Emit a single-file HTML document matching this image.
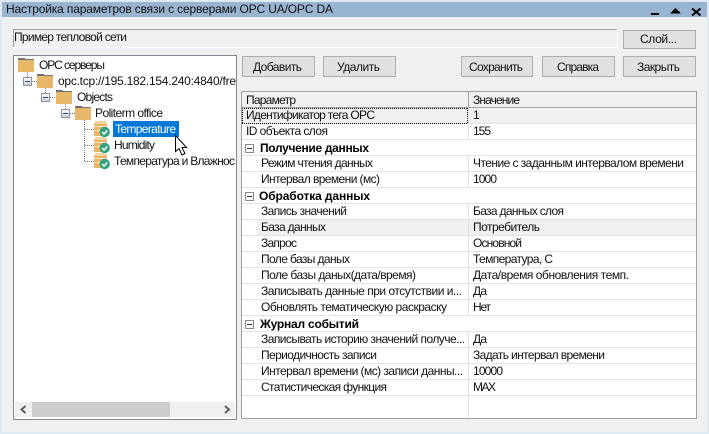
<!DOCTYPE html>
<html><head><meta charset="utf-8"><style>
html,body{margin:0;padding:0;background:#f0f0f0;width:709px;height:434px;overflow:hidden}
svg{display:block}
text{font-family:"Liberation Sans",sans-serif;font-size:12px;fill:#111}
.b{font-weight:bold;fill:#000}
</style></head><body>
<svg width="709" height="434" viewBox="0 0 709 434" xmlns="http://www.w3.org/2000/svg" shape-rendering="crispEdges">
<defs>
<g id="fd"><rect x="0" y="0" width="7" height="1" fill="#6f6f6f"/><rect x="0" y="1" width="16" height="1" fill="#6f6f6f"/><rect x="0" y="2" width="16" height="12" fill="#e8b868"/></g>
<linearGradient id="eg" x1="0" y1="0" x2="0" y2="1"><stop offset="0" stop-color="#fff"/><stop offset="1" stop-color="#c8cdd6"/></linearGradient>
<g id="ex"><rect x=".5" y=".5" width="8" height="8" fill="url(#eg)" stroke="#8c95a0"/><rect x="2" y="4" width="5" height="1" fill="#2b4a7e"/></g>
<g id="db"><rect x="0" y="2" width="13" height="13" fill="#e8b868"/><rect x="1" y="0" width="11" height="3" fill="#f3d49c"/><rect x="0" y="5" width="13" height="1" fill="#f8e8c8"/><rect x="0" y="9" width="13" height="1" fill="#f8e8c8"/><g shape-rendering="auto"><circle cx="10.700" cy="11" r="5.200" fill="#34a27f"/><path d="M8.200 11l1.900 2 3.200-3.500" fill="none" stroke="#fff" stroke-width="1.600"/></g></g>
</defs>
<!-- frame -->
<rect width="709" height="434" fill="#dfe9f5"/>
<rect x="2" y="17" width="705" height="415" fill="#f0f0f0"/>
<rect x="2" y="2" width="705" height="15" fill="#99b4d1"/>
<text x="6" y="13" textLength="327" lengthAdjust="spacing">Настройка параметров связи с серверами OPC UA/OPC DA</text>
<rect x="651" y="13" width="8" height="2" fill="#000"/>
<path d="M670 13.500L675.500 8L681 13.500Z" fill="#000" shape-rendering="auto"/>
<path d="M692 8.500L700.500 15.500M700.500 8.500L692 15.500" stroke="#000" stroke-width="2" fill="none" shape-rendering="auto"/>
<!-- layer name box -->
<rect x="13" y="29" width="605" height="19" fill="#fff"/>
<rect x="13" y="29" width="604" height="18" fill="#f0f0f0"/>
<rect x="13" y="29" width="604" height="1" fill="#a0a0a0"/>
<rect x="13" y="29" width="1" height="18" fill="#a0a0a0"/>
<text x="14" y="41" textLength="113" lengthAdjust="spacing">Пример тепловой сети</text>
<!-- buttons -->
<g fill="#e1e1e1" stroke="#adadad">
<rect x="623.500" y="30.500" width="72" height="18"/>
<rect x="242.500" y="56.500" width="72" height="20"/>
<rect x="323.500" y="56.500" width="72" height="20"/>
<rect x="461.500" y="56.500" width="71" height="20"/>
<rect x="542.500" y="56.500" width="72" height="20"/>
<rect x="623.500" y="56.500" width="72" height="20"/>
</g>
<text x="640" y="43" textLength="37" lengthAdjust="spacing">Слой...</text>
<text x="253" y="71" textLength="49" lengthAdjust="spacing">Добавить</text>
<text x="337" y="71" textLength="43" lengthAdjust="spacing">Удалить</text>
<text x="469" y="71" textLength="54" lengthAdjust="spacing">Сохранить</text>
<text x="557" y="71" textLength="42" lengthAdjust="spacing">Справка</text>
<text x="637" y="71" textLength="43" lengthAdjust="spacing">Закрыть</text>
<!-- tree -->
<rect x="13.500" y="55.500" width="223" height="364" fill="#fff" stroke="#828790"/>
<use href="#fd" x="18" y="58"/>
<use href="#fd" x="37" y="74"/>
<use href="#fd" x="56" y="90"/>
<use href="#fd" x="75" y="106"/>
<g stroke="#777" stroke-dasharray="1 1" fill="none">
<path d="M27.500 72V77M32 81.500H37M45.500 88V93M50 97.500H56M65.500 104V109M70 113.500H75M84.500 120V162M85 129.500H94M85 145.500H94M85 161.500H94"/>
</g>
<use href="#ex" x="23" y="77"/>
<use href="#ex" x="41" y="93"/>
<use href="#ex" x="61" y="109"/>
<use href="#db" x="94" y="121"/>
<use href="#db" x="94" y="137"/>
<use href="#db" x="94" y="153"/>
<text x="39" y="69" textLength="66" lengthAdjust="spacing">OPC серверы</text>
<text x="58" y="85" textLength="178" lengthAdjust="spacing">opc.tcp://195.182.154.240:4840/fre</text>
<text x="77" y="101" textLength="36" lengthAdjust="spacing">Objects</text>
<text x="95" y="117" textLength="68" lengthAdjust="spacing">Politerm office</text>
<rect x="113" y="121" width="66" height="16" fill="#0078d7"/>
<text x="115" y="133" textLength="61" lengthAdjust="spacing" style="fill:#fff">Temperature</text>
<text x="114" y="149" textLength="41" lengthAdjust="spacing">Humidity</text>
<text x="114" y="165" textLength="121" lengthAdjust="spacing">Температура и Влажнос</text>
<!-- tree scrollbar -->
<rect x="15" y="402" width="220" height="15" fill="#f0f0f0"/>
<rect x="32" y="402" width="138" height="15" fill="#cdcdcd"/>
<path d="M25.500 406L21.500 409.500L25.500 413M225 406L229 409.500L225 413" fill="none" stroke="#606060" stroke-width="2" shape-rendering="auto"/>
<!-- cursor -->
<path d="M175.500 135.500V151.500L179 148.500L182 155L185 153.500L182 147.500H186.500Z" fill="#fff" stroke="#000" shape-rendering="auto"/>
<!-- grid -->
<rect x="241" y="91" width="456" height="328" fill="#a0a0a0"/>
<rect x="242" y="92" width="454" height="326" fill="#fff"/>
<rect x="242" y="92" width="454" height="15" fill="#f0f0f0"/>
<rect x="242" y="107" width="454" height="1" fill="#a0a0a0"/>
<rect x="468" y="92" width="1" height="15" fill="#a0a0a0"/>
<!-- shaded rows -->
<rect x="242" y="108" width="454" height="15" fill="#f0f0f0"/>
<rect x="257" y="220" width="439" height="15" fill="#f0f0f0"/>
<!-- row lines -->
<g fill="#e3e3e3">
<rect x="242" y="123" width="454" height="1"/><rect x="242" y="139" width="454" height="1"/><rect x="242" y="155" width="454" height="1"/><rect x="242" y="171" width="454" height="1"/><rect x="242" y="187" width="454" height="1"/><rect x="242" y="203" width="454" height="1"/><rect x="242" y="219" width="454" height="1"/><rect x="242" y="235" width="454" height="1"/><rect x="242" y="251" width="454" height="1"/><rect x="242" y="267" width="454" height="1"/><rect x="242" y="283" width="454" height="1"/><rect x="242" y="299" width="454" height="1"/><rect x="242" y="315" width="454" height="1"/><rect x="242" y="331" width="454" height="1"/><rect x="242" y="347" width="454" height="1"/><rect x="242" y="363" width="454" height="1"/><rect x="242" y="379" width="454" height="1"/><rect x="242" y="395" width="454" height="1"/>
<rect x="468" y="108" width="1" height="32"/><rect x="468" y="156" width="1" height="32"/><rect x="468" y="204" width="1" height="112"/><rect x="468" y="332" width="1" height="86"/>
</g>
<path d="M242 108.500H468M242 123.500H468M242.500 108V124M467.500 108V124" fill="none" stroke="#000" stroke-dasharray="1 1"/>
<!-- group expanders -->
<g fill="#fff" stroke="#8a8a8a">
<rect x="245.500" y="144.500" width="8" height="8"/><rect x="245.500" y="192.500" width="8" height="8"/><rect x="245.500" y="320.500" width="8" height="8"/>
</g>
<g fill="#333"><rect x="247" y="148" width="5" height="1"/><rect x="247" y="196" width="5" height="1"/><rect x="247" y="324" width="5" height="1"/></g>
<!-- grid text -->
<text x="246" y="104" textLength="50" lengthAdjust="spacing">Параметр</text>
<text x="473" y="104" textLength="47" lengthAdjust="spacing">Значение</text>
<text x="246" y="119" textLength="129" lengthAdjust="spacing">Идентификатор тега OPC</text>
<text x="473" y="119">1</text>
<text x="246" y="135" textLength="82" lengthAdjust="spacing">ID объекта слоя</text>
<text x="473" y="135" textLength="18" lengthAdjust="spacing">155</text>
<text x="260" y="152" class="b" textLength="109" lengthAdjust="spacing">Получение данных</text>
<text x="261" y="167" textLength="112" lengthAdjust="spacing">Режим чтения данных</text>
<text x="473" y="167" textLength="211" lengthAdjust="spacing">Чтение с заданным интервалом времени</text>
<text x="261" y="183" textLength="119" lengthAdjust="spacing">Интервал времени (мс)</text>
<text x="473" y="183" textLength="24" lengthAdjust="spacing">1000</text>
<text x="259" y="200" class="b" textLength="111" lengthAdjust="spacing">Обработка данных</text>
<text x="261" y="215" textLength="86" lengthAdjust="spacing">Запись значений</text>
<text x="473" y="215" textLength="91" lengthAdjust="spacing">База данных слоя</text>
<text x="261" y="231" textLength="65" lengthAdjust="spacing">База данных</text>
<text x="473" y="231" textLength="67" lengthAdjust="spacing">Потребитель</text>
<text x="261" y="247" textLength="36" lengthAdjust="spacing">Запрос</text>
<text x="473" y="247" textLength="49" lengthAdjust="spacing">Основной</text>
<text x="261" y="263" textLength="89" lengthAdjust="spacing">Поле базы даных</text>
<text x="473" y="263" textLength="80" lengthAdjust="spacing">Температура, С</text>
<text x="261" y="279" textLength="155" lengthAdjust="spacing">Поле базы даных(дата/время)</text>
<text x="473" y="279" textLength="156" lengthAdjust="spacing">Дата/время обновления темп.</text>
<text x="261" y="295" textLength="201" lengthAdjust="spacing">Записывать данные при отсутствии и...</text>
<text x="473" y="295" textLength="14" lengthAdjust="spacing">Да</text>
<text x="261" y="311" textLength="186" lengthAdjust="spacing">Обновлять тематическую раскраску</text>
<text x="473" y="311" textLength="18" lengthAdjust="spacing">Нет</text>
<text x="260" y="328" class="b" textLength="99" lengthAdjust="spacing">Журнал событий</text>
<text x="261" y="343" textLength="204" lengthAdjust="spacing">Записывать историю значений получе...</text>
<text x="473" y="343" textLength="14" lengthAdjust="spacing">Да</text>
<text x="261" y="359" textLength="116" lengthAdjust="spacing">Периодичность записи</text>
<text x="473" y="359" textLength="132" lengthAdjust="spacing">Задать интервал времени</text>
<text x="261" y="375" textLength="202" lengthAdjust="spacing">Интервал времени (мс) записи данны...</text>
<text x="473" y="375" textLength="30" lengthAdjust="spacing">10000</text>
<text x="261" y="391" textLength="126" lengthAdjust="spacing">Статистическая функция</text>
<text x="473" y="391" textLength="23" lengthAdjust="spacing">MAX</text>
</svg>
</body></html>
